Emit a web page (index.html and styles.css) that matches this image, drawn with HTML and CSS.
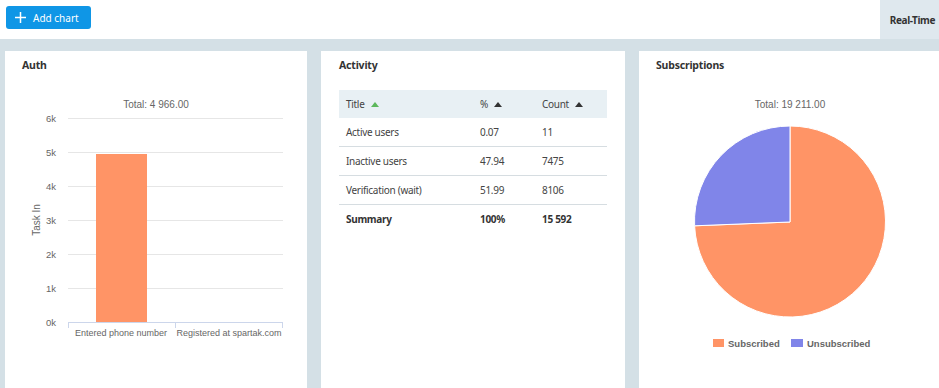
FILE: index.html
```html
<!DOCTYPE html>
<html lang="en">

<head>
    <meta charset="UTF-8">
    <title>Dashboard</title>
    <link rel="stylesheet" href="styles.css">
</head>

<body>
    <div class="topbar">
        <button class="add-btn">
            <svg width="11" height="11" viewBox="0 0 11 11"><path d="M5.5 0V11M0 5.5H11" stroke="#fff" stroke-width="1.5"/></svg>
            <span>Add chart</span>
        </button>
        <div class="tab">Real-Time</div>
    </div>

    <div class="board">
        <div class="card card-auth">
            <div class="card-title">Auth</div>
            <svg class="chart" width="302" height="290">
                <text x="151" y="27" class="chart-total">Total: 4 966.00</text>
                <g class="grid">
                    <line x1="63" x2="278" y1="37.5" y2="37.5"/>
                    <line x1="63" x2="278" y1="71.5" y2="71.5"/>
                    <line x1="63" x2="278" y1="105.5" y2="105.5"/>
                    <line x1="63" x2="278" y1="139.5" y2="139.5"/>
                    <line x1="63" x2="278" y1="173.5" y2="173.5"/>
                    <line x1="63" x2="278" y1="207.5" y2="207.5"/>
                </g>
                <g class="ylabels">
                    <text x="51" y="41">6k</text>
                    <text x="51" y="75">5k</text>
                    <text x="51" y="109">4k</text>
                    <text x="51" y="143">3k</text>
                    <text x="51" y="177">2k</text>
                    <text x="51" y="211">1k</text>
                    <text x="51" y="245">0k</text>
                </g>
                <text class="axis-title" transform="translate(35 139) rotate(-90)">Task In</text>
                <rect x="91" y="73" width="51" height="168" fill="#ff9466"/>
                <g class="axis">
                    <line x1="63" x2="278" y1="241.5" y2="241.5"/>
                    <line x1="63.5" x2="63.5" y1="241" y2="247"/>
                    <line x1="170.5" x2="170.5" y1="241" y2="247"/>
                    <line x1="277.5" x2="277.5" y1="241" y2="247"/>
                </g>
                <g class="xlabels">
                    <text x="116" y="255">Entered phone number</text>
                    <text x="224" y="255">Registered at spartak.com</text>
                </g>
            </svg>
        </div>

        <div class="card card-activity">
            <div class="card-title">Activity</div>
            <table class="stats">
                <thead>
                    <tr>
                        <th class="col-title">Title <span class="sort sort-active"></span></th>
                        <th class="col-pct">% <span class="sort"></span></th>
                        <th>Count <span class="sort"></span></th>
                    </tr>
                </thead>
                <tbody>
                    <tr><td>Active users</td><td>0.07</td><td>11</td></tr>
                    <tr><td>Inactive users</td><td>47.94</td><td>7475</td></tr>
                    <tr><td>Verification (wait)</td><td>51.99</td><td>8106</td></tr>
                    <tr class="summary"><td>Summary</td><td>100%</td><td>15 592</td></tr>
                </tbody>
            </table>
        </div>

        <div class="card card-subs">
            <div class="card-title">Subscriptions</div>
            <svg class="chart" width="304" height="290">
                <text x="151" y="27" class="chart-total">Total: 19 211.00</text>
                <path d="M151 45 A95.5 95.5 0 1 1 55.6 144.8 L151 141 Z" fill="#ff9466" stroke="#fff" stroke-width="1"/>
                <path d="M151 45 A95.5 95.5 0 0 0 55.6 144.8 L151 141 Z" fill="#8085e9" stroke="#fff" stroke-width="1"/>
                <g class="legend">
                    <rect x="74" y="258" width="11" height="8" fill="#ff9466"/>
                    <text x="89" y="266">Subscribed</text>
                    <rect x="152" y="258" width="12" height="8" fill="#8085e9"/>
                    <text x="168" y="266">Unsubscribed</text>
                </g>
            </svg>
        </div>
    </div>
</body>

</html>
```

FILE: styles.css
```css
body {
    margin: 0;
    height: 388px;
    overflow: hidden;
    font-family: "Noto Sans", Arial, sans-serif;
    background: #d4e0e6;
}

.topbar {
    display: flex;
    justify-content: space-between;
    height: 39px;
    background: #ffffff;
}

.add-btn {
    display: flex;
    align-items: center;
    gap: 7px;
    margin: 6px;
    width: 85px;
    height: 23px;
    padding: 0 0 0 9px;
    border: none;
    border-radius: 3px;
    background: #0f96e6;
    color: #ffffff;
    font-family: "Noto Sans", Arial, sans-serif;
    font-size: 10px;
}

.tab {
    display: flex;
    align-items: center;
    justify-content: flex-end;
    width: 59px;
    padding-right: 4px;
    box-sizing: border-box;
    background: #dfe8ee;
    color: #333333;
    font-size: 10px;
    font-weight: bold;
    letter-spacing: -0.4px;
}

.board {
    display: flex;
    gap: 14px;
    padding: 12px 0 0 5px;
}

.card {
    flex: none;
    width: 304px;
    height: 345px;
    background: #ffffff;
}

.card-auth {
    width: 302px;
}

.card-title {
    height: 30px;
    padding: 7px 0 0 17px;
    box-sizing: border-box;
    font-size: 10.5px;
    font-weight: bold;
    letter-spacing: -0.2px;
    color: #333333;
}

.card-activity .card-title {
    padding-left: 18px;
}

.chart {
    display: block;
    font-family: "Liberation Sans", Arial, sans-serif;
}

.chart-total {
    font-size: 10px;
    fill: #666666;
    text-anchor: middle;
}

.grid line {
    stroke: #e6e6e6;
    stroke-width: 1;
}

.axis line {
    stroke: #ccd6eb;
    stroke-width: 1;
}

.ylabels text {
    font-size: 9.5px;
    fill: #666666;
    text-anchor: end;
}

.axis-title {
    font-size: 10px;
    fill: #666666;
    text-anchor: middle;
}

.xlabels text {
    font-size: 9px;
    fill: #666666;
    text-anchor: middle;
}

.legend text {
    font-size: 9.5px;
    font-weight: bold;
    fill: #666666;
}

.stats {
    width: 268px;
    margin: 9px 0 0 18px;
    border-collapse: collapse;
    font-size: 10px;
    letter-spacing: -0.3px;
    color: #444444;
}

.stats th {
    height: 28px;
    padding: 0 0 0 7px;
    background: #e8f0f4;
    font-weight: normal;
    text-align: left;
}

.stats .col-title {
    width: 127px;
}

.stats .col-pct {
    width: 55px;
}

.stats td {
    height: 28px;
    padding: 0 0 0 7px;
    border-bottom: 1px solid #d6dde1;
}

.stats .summary td {
    border-bottom: none;
    font-weight: bold;
    color: #333333;
}

.sort {
    display: inline-block;
    margin-left: 4px;
    border-left: 4px solid transparent;
    border-right: 4px solid transparent;
    border-bottom: 5px solid #333333;
    vertical-align: 1px;
}

.sort-active {
    border-bottom-color: #5cb85c;
}
```
